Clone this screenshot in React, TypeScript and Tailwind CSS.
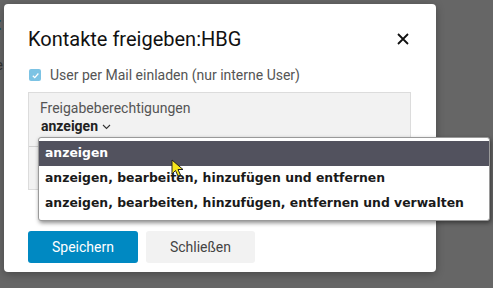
import React from 'react';

function Cursor() {
    return (
        <svg className="absolute left-[171px] top-[159px]" width="16" height="20" viewBox="0 0 16 20">
            <path d="M1 1 L1 15 L4.5 11.5 L7 17 L9.5 16 L7 10.5 L12 10.5 Z" fill="#f5e51b" stroke="#222" strokeWidth="1" strokeLinejoin="round" />
        </svg>
    );
}

export default function App() {
    const options = [
        'anzeigen',
        'anzeigen, bearbeiten, hinzufügen und entfernen',
        'anzeigen, bearbeiten, hinzufügen, entfernen und verwalten',
    ];
    return (
        <div className="relative w-[493px] h-[288px] overflow-hidden bg-[#666666] font-['Roboto',sans-serif]">
            {/* page behind the overlay */}
            <div className="absolute left-[-5px] top-[10px] text-[18px] font-bold text-[#1d4d63]">t</div>
            <div className="absolute left-[-5px] top-[54px] text-[15px] text-[#333]">e</div>

            <div className="relative ml-[4px] mt-[4px] w-[432px] h-[268px] rounded-[4px] bg-white shadow-[0_2px_8px_rgba(0,0,0,0.3)] px-[24px] pt-[23px]">
                <div className="flex items-center justify-between h-[24px]">
                    <div className="text-[20px] text-[#111]">Kontakte freigeben:HBG</div>
                    <svg width="12" height="12" viewBox="0 0 12 12" className="mr-[3px]">
                        <path d="M1 1 L11 11 M11 1 L1 11" stroke="#111" strokeWidth="1.8" />
                    </svg>
                </div>
                <div className="flex items-center gap-[9px] mt-[14px] h-[20px]">
                    <div className="w-[12px] h-[12px] ml-[1px] rounded-[2px] bg-[#7cc3e4] flex items-center justify-center">
                        <svg width="9" height="9" viewBox="0 0 10 10">
                            <path d="M2 5.2 L4.2 7.4 L8.2 2.8" stroke="white" strokeWidth="1.4" fill="none" />
                        </svg>
                    </div>
                    <div className="text-[14px] text-[#555]">User per Mail einladen (nur interne User)</div>
                </div>
                <div className="mt-[7px] w-[383px] h-[98px] bg-[#f2f2f2] border border-[#dcdcdc]">
                    <div className="pl-[11px] pt-[7px] text-[14px] text-[#555] leading-[17px]">Freigabeberechtigungen</div>
                    <div className="flex items-center gap-[4px] pl-[12px] h-[19px] text-[14px] font-bold text-[#222]">
                        anzeigen
                        <svg width="9" height="6" viewBox="0 0 9 6">
                            <path d="M1 1 L4.5 4.5 L8 1" stroke="#333" strokeWidth="1.1" fill="none" />
                        </svg>
                    </div>
                    <div className="mt-[10px] border-t border-[#d0d0d0]"></div>
                </div>
                <div className="flex gap-[8px] mt-[41px]">
                    <button className="w-[110px] h-[32px] rounded-[3px] bg-[#0089c2] text-white text-[14px]">Speichern</button>
                    <button className="w-[109px] h-[32px] rounded-[3px] bg-[#f2f2f2] text-[#444] text-[14px]">Schließen</button>
                </div>
            </div>

            <div className="absolute left-[38px] top-[137px] w-[452px] h-[84px] rounded-[3px] bg-white border border-[#9a9a9a] shadow-[1px_2px_4px_rgba(0,0,0,0.45)] pt-[3px] font-['DejaVu_Sans',sans-serif]">
                {options.map((o, i) => (
                    <div
                        key={i}
                        className={
                            i === 0
                                ? 'h-[25px] flex items-center pl-[6px] bg-[#52525e] text-white text-[12.4px] font-bold'
                                : 'h-[25px] flex items-center pl-[6px] text-[#1a1a1a] text-[12.4px] font-bold'
                        }
                    >
                        {o}
                    </div>
                ))}
            </div>
            <Cursor />
        </div>
    );
}
